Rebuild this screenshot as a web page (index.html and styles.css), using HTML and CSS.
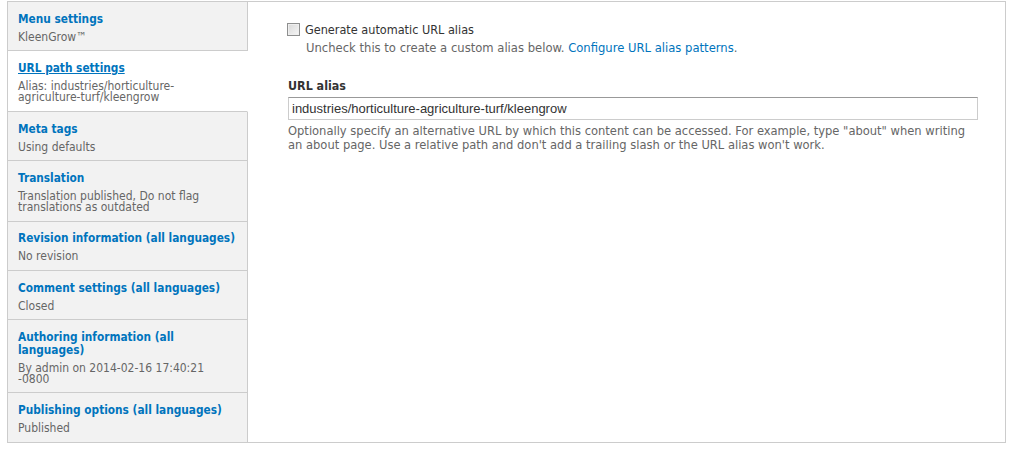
FILE: index.html
```html
<!DOCTYPE html>
<html lang="en">
<head>
<meta charset="utf-8">
<title>Vertical tabs</title>
<link rel="stylesheet" href="styles.css">
</head>
<body>
<div class="vtabs">
  <ul class="vtabs-menu">
    <li class="vtab"><a class="vtab-title" href="#">Menu settings</a><span class="vtab-summary">KleenGrow™</span></li>
    <li class="vtab is-selected"><a class="vtab-title" href="#">URL path settings</a><span class="vtab-summary">Alias: industries/horticulture-agriculture-turf/kleengrow</span></li>
    <li class="vtab"><a class="vtab-title" href="#">Meta tags</a><span class="vtab-summary">Using defaults</span></li>
    <li class="vtab"><a class="vtab-title" href="#">Translation</a><span class="vtab-summary">Translation published, Do not flag translations as outdated</span></li>
    <li class="vtab"><a class="vtab-title" href="#">Revision information (all languages)</a><span class="vtab-summary">No revision</span></li>
    <li class="vtab"><a class="vtab-title" href="#">Comment settings (all languages)</a><span class="vtab-summary">Closed</span></li>
    <li class="vtab"><a class="vtab-title" href="#">Authoring information (all languages)</a><span class="vtab-summary">By admin on 2014-02-16 17:40:21 -0800</span></li>
    <li class="vtab last"><a class="vtab-title" href="#">Publishing options (all languages)</a><span class="vtab-summary">Published</span></li>
  </ul>
  <div class="vtabs-pane">
    <div class="form-check">
      <input class="checkbox" type="checkbox" id="auto-alias">
      <label class="check-label" for="auto-alias">Generate automatic URL alias</label>
    </div>
    <div class="check-desc">Uncheck this to create a custom alias below. <a class="link" href="#">Configure URL alias patterns</a>.</div>
    <label class="field-label" for="alias">URL alias</label>
    <input class="text-input" id="alias" type="text" value="industries/horticulture-agriculture-turf/kleengrow">
    <div class="field-desc">Optionally specify an alternative URL by which this content can be accessed. For example, type "about" when writing an about page. Use a relative path and don't add a trailing slash or the URL alias won't work.</div>
  </div>
</div>
</body>
</html>
```

FILE: styles.css
```css
html, body {
  margin: 0;
  padding: 0;
  background: #fff;
}

body {
  font-family: "DejaVu Sans Condensed", "DejaVu Sans", sans-serif;
  font-stretch: semi-condensed;
  color: #333;
}

.vtabs {
  box-sizing: border-box;
  width: 999px;
  margin: 1px 0 0 7px;
  border: 1px solid #ccc;
  display: flex;
  align-items: stretch;
}

.vtabs-menu {
  list-style: none;
  margin: 0;
  padding: 0;
  width: 240px;
  flex: 0 0 240px;
  box-sizing: border-box;
  display: flex;
  flex-direction: column;
}

.vtab {
  box-sizing: border-box;
  background: #f2f2f2;
  border-right: 1px solid #ccc;
  border-bottom: 1px solid #ccc;
  padding: 10.9px 10px 7.5px 10px;
}

.vtab.last {
  border-bottom: 0;
  flex: 1 1 auto;
}

.vtab.is-selected {
  background: #fff;
  border-right-color: #fff;
}

.vtab-title {
  display: block;
  color: #0074bd;
  font-weight: bold;
  font-size: 11.75px;
  line-height: 12.5px;
  text-decoration: none;
}

.is-selected .vtab-title {
  text-decoration: underline;
}

.vtab-summary {
  display: block;
  margin: 6.5px 8px 0 0;
  color: #666;
  font-size: 12px;
  line-height: 11px;
}

.vtabs-pane {
  flex: 1 1 auto;
  padding: 19.5px 28px 10px 40px;
}

.form-check {
  display: flex;
  align-items: center;
  height: 15px;
}

.checkbox {
  appearance: none;
  -webkit-appearance: none;
  box-sizing: border-box;
  width: 13px;
  height: 13px;
  margin: 0 5px 0 -1px;
  border: 1px solid #8e8f8f;
  background: linear-gradient(135deg, #d8d8d8 0%, #f6f6f6 100%);
  box-shadow: inset 0 0 0 1px #eeeeee;
}

.check-label {
  font-size: 12.55px;
  line-height: 15px;
  color: #333;
}

.check-desc {
  margin: 4.2px 0 0 18px;
  font-size: 12.9px;
  line-height: 14.3px;
  color: #666;
}

.link {
  color: #0074bd;
  text-decoration: none;
}

.field-label {
  display: block;
  margin-top: 23.3px;
  font-size: 12.4px;
  font-weight: bold;
  line-height: 15px;
  color: #333;
}

.text-input {
  display: block;
  box-sizing: border-box;
  width: 690px;
  height: 23px;
  margin: 3.4px 0 0 0;
  padding: 0 3px;
  border: 1px solid #ccc;
  border-top-color: #999;
  border-radius: 0;
  font-family: "Liberation Sans", Arial, sans-serif;
  font-stretch: normal;
  font-size: 13px;
  color: #333;
  background: #fff;
}

.field-desc {
  width: 690px;
  margin-top: 4.5px;
  font-size: 12.8px;
  line-height: 14.3px;
  color: #666;
}
```
